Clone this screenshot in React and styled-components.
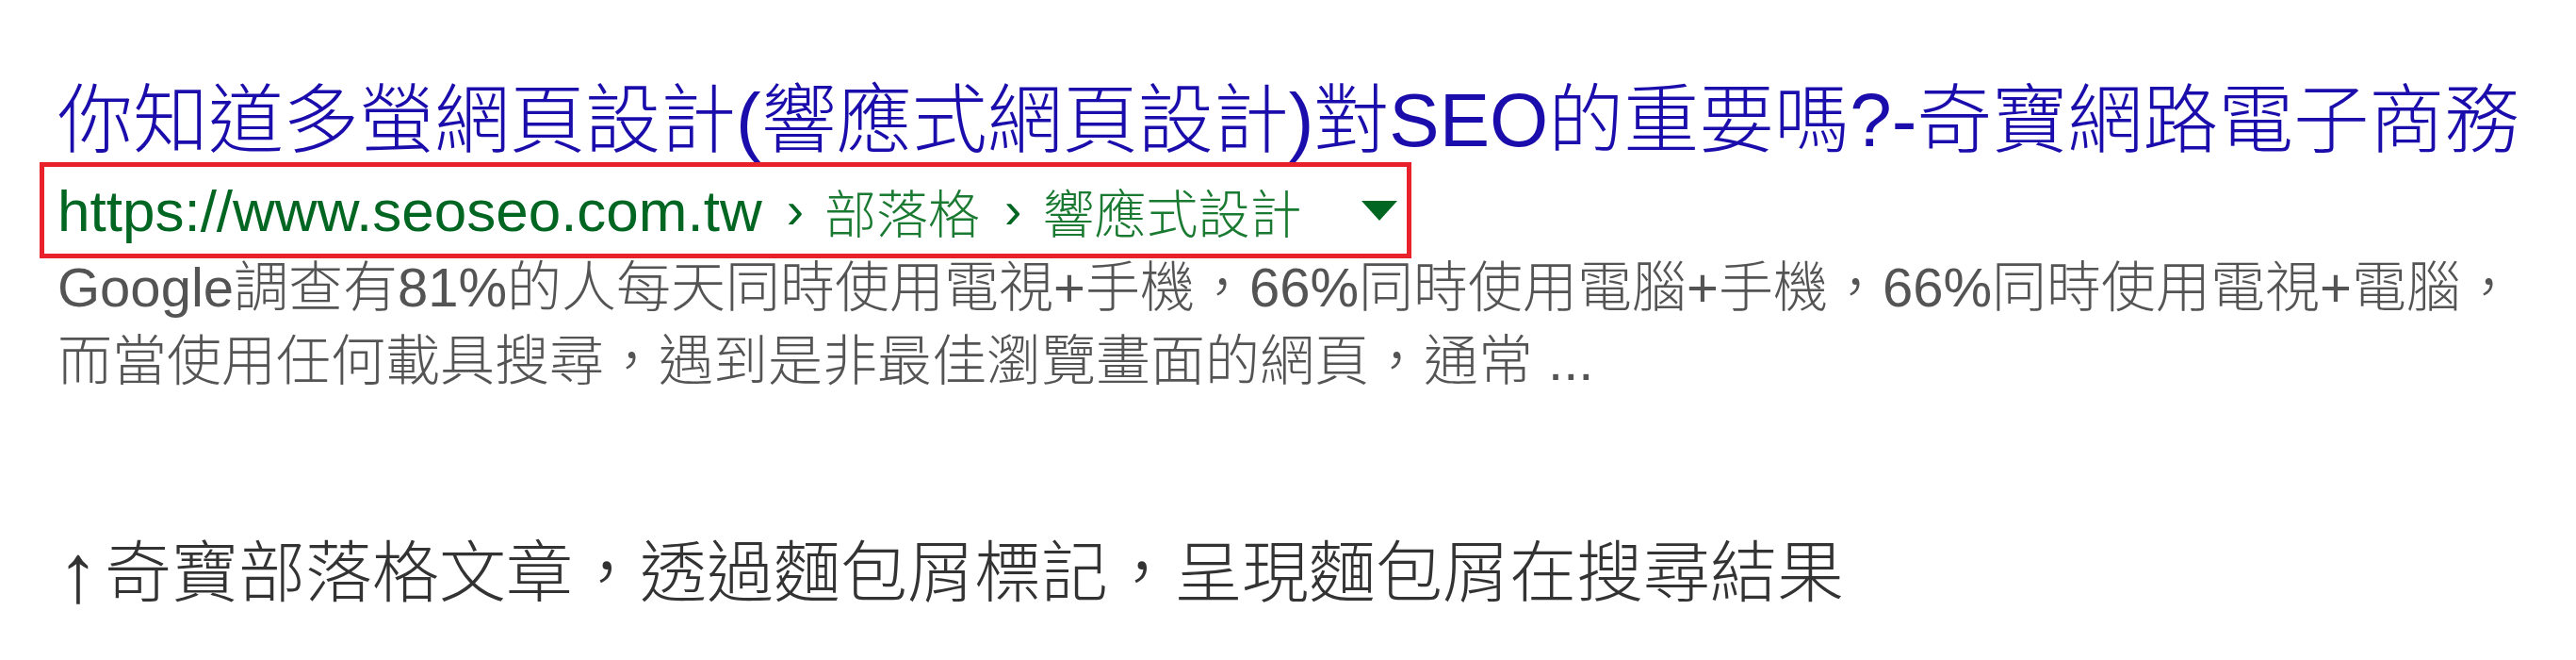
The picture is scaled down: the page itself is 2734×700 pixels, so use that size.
import React from "react";
import { styled, createGlobalStyle } from "styled-components";

const GlobalStyle = createGlobalStyle`
  html, body {
    margin: 0;
    padding: 0;
    background: #ffffff;
  }
  body {
    font-family: "Liberation Sans", "Noto Sans CJK TC", sans-serif;
  }
`;

const App = () => {
  return (
    <>
      <GlobalStyle />
      <Page>
        <Result>
          <Title>你知道多螢網頁設計(響應式網頁設計)對SEO的重要嗎?-奇寶網路電子商務</Title>
          <UrlBox>
            <Url>https://www.seoseo.com.tw</Url>
            <Sep>›</Sep>
            <Crumb>部落格</Crumb>
            <Sep>›</Sep>
            <Crumb>響應式設計</Crumb>
            <DropArrow viewBox="0 0 38 21">
              <polygon points="0,0 38,0 19,21" fill="#006621" />
            </DropArrow>
          </UrlBox>
          <Snippet>
            Google調查有81%的人每天同時使用電視+手機，66%同時使用電腦+手機，66%同時使用電視+電腦，
            <br />
            而當使用任何載具搜尋，遇到是非最佳瀏覽畫面的網頁，通常 ...
          </Snippet>
        </Result>
        <Caption>
          <UpArrow>↑</UpArrow>奇寶部落格文章，透過麵包屑標記，呈現麵包屑在搜尋結果
        </Caption>
      </Page>
    </>
  );
};

export default App;

const Page = styled.div`
  width: 2734px;
  height: 700px;
  box-sizing: border-box;
  padding: 84px 0 0 61px;
  display: flex;
  flex-direction: column;
  overflow: hidden;
`;

const Result = styled.div`
  display: flex;
  flex-direction: column;
  align-items: flex-start;
`;

const Title = styled.div`
  font-size: 80px;
  font-weight: 300;
  line-height: 88px;
  color: #1a0dab;
  white-space: nowrap;
`;

const UrlBox = styled.div`
  display: inline-flex;
  align-items: center;
  margin-left: -19px;
  padding: 0 10px 0 14px;
  height: 92px;
  border: 5px solid #e8212b;
  white-space: nowrap;
`;

const Url = styled.span`
  font-size: 62px;
  color: #006621;
`;

const Sep = styled.span`
  font-size: 55px;
  color: #006621;
  margin: 0 22px 0 26px;
`;

const Crumb = styled.span`
  font-size: 55px;
  font-weight: 300;
  color: #1b7a32;
`;

const DropArrow = styled.svg`
  width: 38px;
  height: 21px;
  margin-left: 64px;
`;

const Snippet = styled.div`
  margin-top: -8px;
  font-size: 58px;
  font-weight: 300;
  line-height: 78px;
  color: #545454;
  white-space: nowrap;
`;

const Caption = styled.div`
  display: flex;
  align-items: center;
  margin-top: 144px;
  font-size: 71px;
  font-weight: 300;
  line-height: 84px;
  color: #333333;
  white-space: nowrap;
`;

const UpArrow = styled.span`
  font-size: 88px;
  line-height: 84px;
  margin-right: 6px;
`;
